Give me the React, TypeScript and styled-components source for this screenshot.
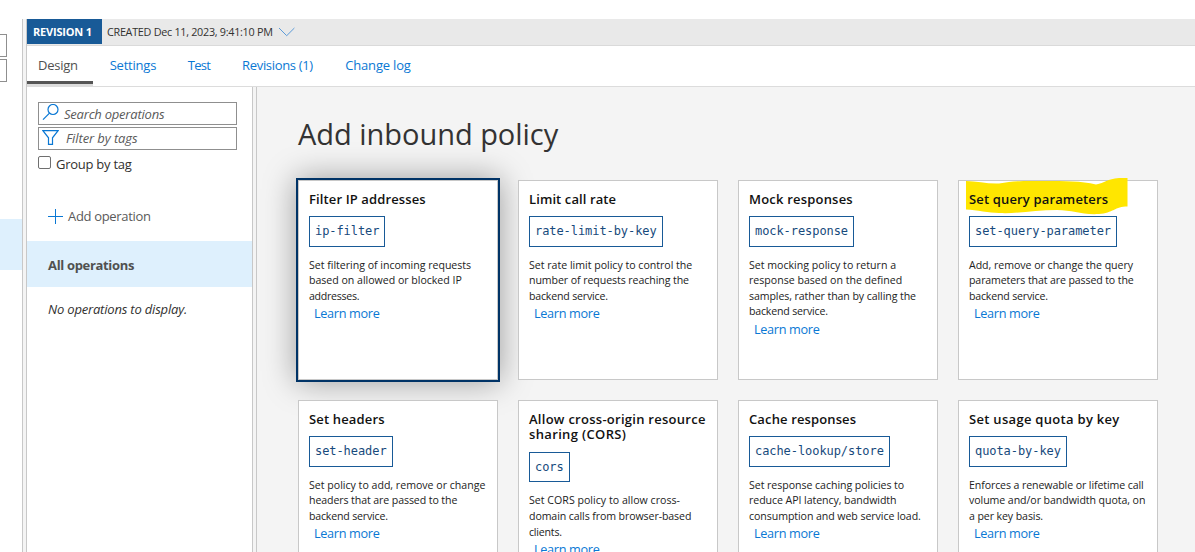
import React from 'react';
import styled, { createGlobalStyle } from 'styled-components';

const Global = createGlobalStyle`
  * { box-sizing: border-box; }
  html, body { margin: 0; background: #fff; overflow: hidden; }
  body { font-family: "Open Sans", "Noto Sans", sans-serif; font-size: 13px; color: #323130; }
`;

const Page = styled.div`
  display: flex;
  width: 1195px;
  height: 552px;
  padding-top: 19px;
  overflow: hidden;
`;

const PreviousPane = styled.div`
  width: 22px;
  flex: none;
  padding-top: 15px;
`;

const CutInput = styled.div`
  width: 7px;
  height: 23px;
  margin-bottom: 2px;
  border: 1px solid #8f8f8f;
  border-left: 0;
`;

const CutSelection = styled.div`
  height: 51px;
  margin-top: 137px;
  background: #def0fd;
`;

const Splitter = styled.div`
  width: 5px;
  flex: none;
  background: #f4f4f4;
  border: solid #c8c8c8;
  border-width: 0 1px;
`;

const Main = styled.main`
  flex: 1;
  min-width: 0;
  display: flex;
  flex-direction: column;
`;

const RevisionBar = styled.header`
  display: flex;
  height: 27px;
  flex: none;
  background: #e9e9e9;
  border-bottom: 1px solid #dadada;
  font-size: 11px;
  line-height: 26px;
  white-space: nowrap;
`;

const RevisionBadge = styled.div`
  width: 75px;
  height: 25px;
  padding-left: 6px;
  background: #185a97;
  color: #fff;
  font-weight: 700;
  letter-spacing: -0.2px;
`;

const Created = styled.div`
  height: 26px;
  padding-left: 5px;
  width: 176px;
  font-size: 10.8px;
  letter-spacing: -0.28px;
`;

const Tabs = styled.nav`
  display: flex;
  height: 41px;
  flex: none;
  border-bottom: 1px solid #dcdcdc;
`;

const Tab = styled.a<{ $w: number; $ls: number; $active?: boolean }>`
  width: ${p => p.$w}px;
  height: ${p => (p.$active ? 38 : 40)}px;
  padding-left: 11px;
  line-height: 39px;
  white-space: nowrap;
  letter-spacing: ${p => p.$ls}px;
  color: ${p => (p.$active ? '#505050' : '#0a78d4')};
  ${p => p.$active && 'margin-right: 5.7px; border-bottom: 3px solid #555; box-shadow: 0 2px 0 #dcdcdc;'}
`;

const Body = styled.div`
  display: flex;
  flex: 1;
  min-height: 0;
`;

const Sidebar = styled.aside`
  width: 225px;
  flex: none;
  padding-top: 15px;
`;

const Field = styled.div<{ $gap: number; $ls: number; $lh: number }>`
  display: flex;
  gap: ${p => p.$gap}px;
  width: 199px;
  height: 23px;
  margin: 0 0 2px 11px;
  padding-left: 3px;
  border: 1px solid #8f8f8f;
  color: #5a5a5a;
  font-style: italic;
  line-height: ${p => p.$lh}px;
  letter-spacing: ${p => p.$ls}px;
  svg { flex: none; margin-top: 1px; }
`;

const CheckRow = styled.label`
  display: flex;
  height: 24px;
  margin: 2px 0 0 11px;
  gap: 5px;
  line-height: 24px;
  letter-spacing: -0.26px;
`;

const CheckBox = styled.span`
  width: 13px;
  height: 13px;
  margin-top: 4px;
  border: 1px solid #6f6f6f;
  border-radius: 2px;
`;

const AddOperation = styled.div`
  display: flex;
  align-items: center;
  height: 24px;
  margin: 28px 0 13px 21px;
  gap: 5px;
  color: #5a5a5a;
  letter-spacing: -0.33px;
`;

const AllOperations = styled.div`
  height: 46px;
  padding-left: 21px;
  line-height: 48px;
  background: #def0fd;
  color: #505050;
  font-weight: 700;
  letter-spacing: -0.33px;
`;

const Empty = styled.div`
  padding: 13px 0 0 21px;
  line-height: 18px;
  font-style: italic;
  letter-spacing: -0.19px;
`;

const Content = styled.section`
  flex: 1;
  min-width: 0;
  padding: 26px 0 0 41px;
  background: #f4f4f4;
  overflow: hidden;
`;

const Heading = styled.h1`
  margin: 0 0 25px;
  height: 42px;
  line-height: 42px;
  font-size: 29px;
  font-weight: 400;
  letter-spacing: -0.03px;
  color: #333;
`;

const Grid = styled.div`
  display: grid;
  grid-template-columns: repeat(4, 200px);
  grid-auto-rows: 200px;
  gap: 20px;
`;

const Card = styled.article<{ $selected?: boolean }>`
  position: relative;
  padding: 10px;
  background: #fff;
  border: 1px solid #c8c8c8;
  ${p => p.$selected && 'box-shadow: 0 0 0 2px #003366, 0 0 30px 2px rgba(0, 0, 0, 0.36);'}
`;

const Title = styled.h2`
  position: relative;
  margin: 0 0 8.65px;
  padding-top: 0.6px;
  font-size: 13px;
  line-height: 15.75px;
  font-weight: 600;
  color: #111;
`;

const Code = styled.code`
  display: block;
  width: max-content;
  height: 30.6px;
  padding: 0 5px;
  border: 1px solid #185a97;
  font: 12px/28px "DejaVu Sans Mono", monospace;
  letter-spacing: -0.07px;
  color: #174a7c;
`;

const Description = styled.p`
  margin: 11px 0 0;
  font-size: 10.6px;
  line-height: 15.6px;
  color: #222;
`;

const Line = styled.span<{ $ls: number }>`
  display: block;
  white-space: nowrap;
  letter-spacing: ${p => p.$ls}px;
`;

const Learn = styled.a`
  display: block;
  margin: 0.8px 0 0 5px;
  font-size: 12.7px;
  line-height: 17px;
  letter-spacing: -0.33px;
  color: #0a78d4;
`;

const Marker = styled.svg`
  position: absolute;
  left: 6px;
  top: -4px;
`;

type Policy = {
  title: [string, number][];
  code: string;
  lines: [string, number][];
  selected?: boolean;
  marked?: boolean;
};

const policies: Policy[] = [
  { title: [['Filter IP addresses', 0.12]], code: 'ip-filter', selected: true,
    lines: [['Set filtering of incoming requests', -0.02], ['based on allowed or blocked IP', -0.02], ['addresses.', -0.27]] },
  { title: [['Limit call rate', 0.1]], code: 'rate-limit-by-key',
    lines: [['Set rate limit policy to control the', -0.01], ['number of requests reaching the', -0.08], ['backend service.', -0.19]] },
  { title: [['Mock responses', 0.2]], code: 'mock-response',
    lines: [['Set mocking policy to return a', 0], ['response based on the defined', 0], ['samples, rather than by calling the', -0.09], ['backend service.', -0.19]] },
  { title: [['Set query parameters', 0.15]], code: 'set-query-parameter', marked: true,
    lines: [['Add, remove or change the query', -0.03], ['parameters that are passed to the', -0.12], ['backend service.', -0.19]] },
  { title: [['Set headers', 0.15]], code: 'set-header',
    lines: [['Set policy to add, remove or change', 0], ['headers that are passed to the', -0.1], ['backend service.', -0.19]] },
  { title: [['Allow cross-origin resource', 0.27], ['sharing (CORS)', 0.35]], code: 'cors',
    lines: [['Set CORS policy to allow cross-', 0.02], ['domain calls from browser-based', -0.1], ['clients.', -0.2]] },
  { title: [['Cache responses', 0.13]], code: 'cache-lookup/store',
    lines: [['Set response caching policies to', -0.05], ['reduce API latency, bandwidth', -0.07], ['consumption and web service load.', -0.07]] },
  { title: [['Set usage quota by key', 0.3]], code: 'quota-by-key',
    lines: [['Enforces a renewable or lifetime call', -0.1], ['volume and/or bandwidth quota, on', -0.07], ['a per key basis.', -0.1]] },
];

export default function App() {
  return (
    <>
      <Global />
      <Page>
        <PreviousPane>
          <CutInput />
          <CutInput />
          <CutSelection />
        </PreviousPane>
        <Splitter />
        <Main>
          <RevisionBar>
            <RevisionBadge>REVISION 1</RevisionBadge>
            <Created>CREATED Dec 11, 2023, 9:41:10 PM</Created>
            <svg width="18" height="26" viewBox="0 0 18 26" fill="none" stroke="#5c9bd8">
              <path d="M1 9 L8.7 16.7 L16.4 9" />
            </svg>
          </RevisionBar>
          <Tabs>
            <Tab $w={66} $ls={-0.25} $active>Design</Tab>
            <Tab $w={78.1} $ls={-0.22}>Settings</Tab>
            <Tab $w={54.3} $ls={-0.7}>Test</Tab>
            <Tab $w={103.2} $ls={-0.33}>Revisions (1)</Tab>
            <Tab $w={90} $ls={-0.18}>Change log</Tab>
          </Tabs>
          <Body>
            <Sidebar>
              <Field $gap={5} $ls={-0.22} $lh={22}>
                <svg width="17" height="19" viewBox="0 0 17 19" fill="none" stroke="#0a78d4" strokeWidth="1.2">
                  <circle cx="11" cy="5.5" r="5" />
                  <path d="M7.5 9.2 L1 15.7" />
                </svg>
                Search operations
              </Field>
              <Field $gap={7} $ls={-0.1} $lh={21}>
                <svg width="17" height="19" viewBox="0 0 17 19" fill="none" stroke="#0a78d4" strokeWidth="1.2">
                  <path d="M0.9 1.6 H16.1 L10.5 8.8 V15.4 H6.5 V8.8 Z" />
                </svg>
                Filter by tags
              </Field>
              <CheckRow><CheckBox />Group by tag</CheckRow>
              <AddOperation>
                <svg width="15" height="15" viewBox="0 0 15 15" stroke="#0a78d4">
                  <path d="M0 7.5 H15 M7.5 0 V15" />
                </svg>
                Add operation
              </AddOperation>
              <AllOperations>All operations</AllOperations>
              <Empty>No operations to display.</Empty>
            </Sidebar>
            <Splitter />
            <Content>
              <Heading>Add inbound policy</Heading>
              <Grid>
                {policies.map(p => (
                  <Card key={p.code} $selected={p.selected}>
                    {p.marked && (
                      <Marker width="164" height="40" viewBox="0 0 164 40" fill="#ffe600">
                        <path d="M1 4 C12 4 22 7 34 6.500 C50 3.500 60 4 80 4 C100 4 116 4 131 7.500 C140 6 142 2 154 1 H162.500 V29.500 C150 29.500 148 36 134 37 C116 38 108 33 92 33 C70 33 52 37 34 36 C24 36 12 33 1 32.500 Z" />
                      </Marker>
                    )}
                    <Title>
                      {p.title.map(([text, ls]) => <Line key={text} $ls={ls}>{text}</Line>)}
                    </Title>
                    <Code>{p.code}</Code>
                    <Description>
                      {p.lines.map(([text, ls]) => <Line key={text} $ls={ls}>{text}</Line>)}
                    </Description>
                    <Learn>Learn more</Learn>
                  </Card>
                ))}
              </Grid>
            </Content>
          </Body>
        </Main>
      </Page>
    </>
  );
}
